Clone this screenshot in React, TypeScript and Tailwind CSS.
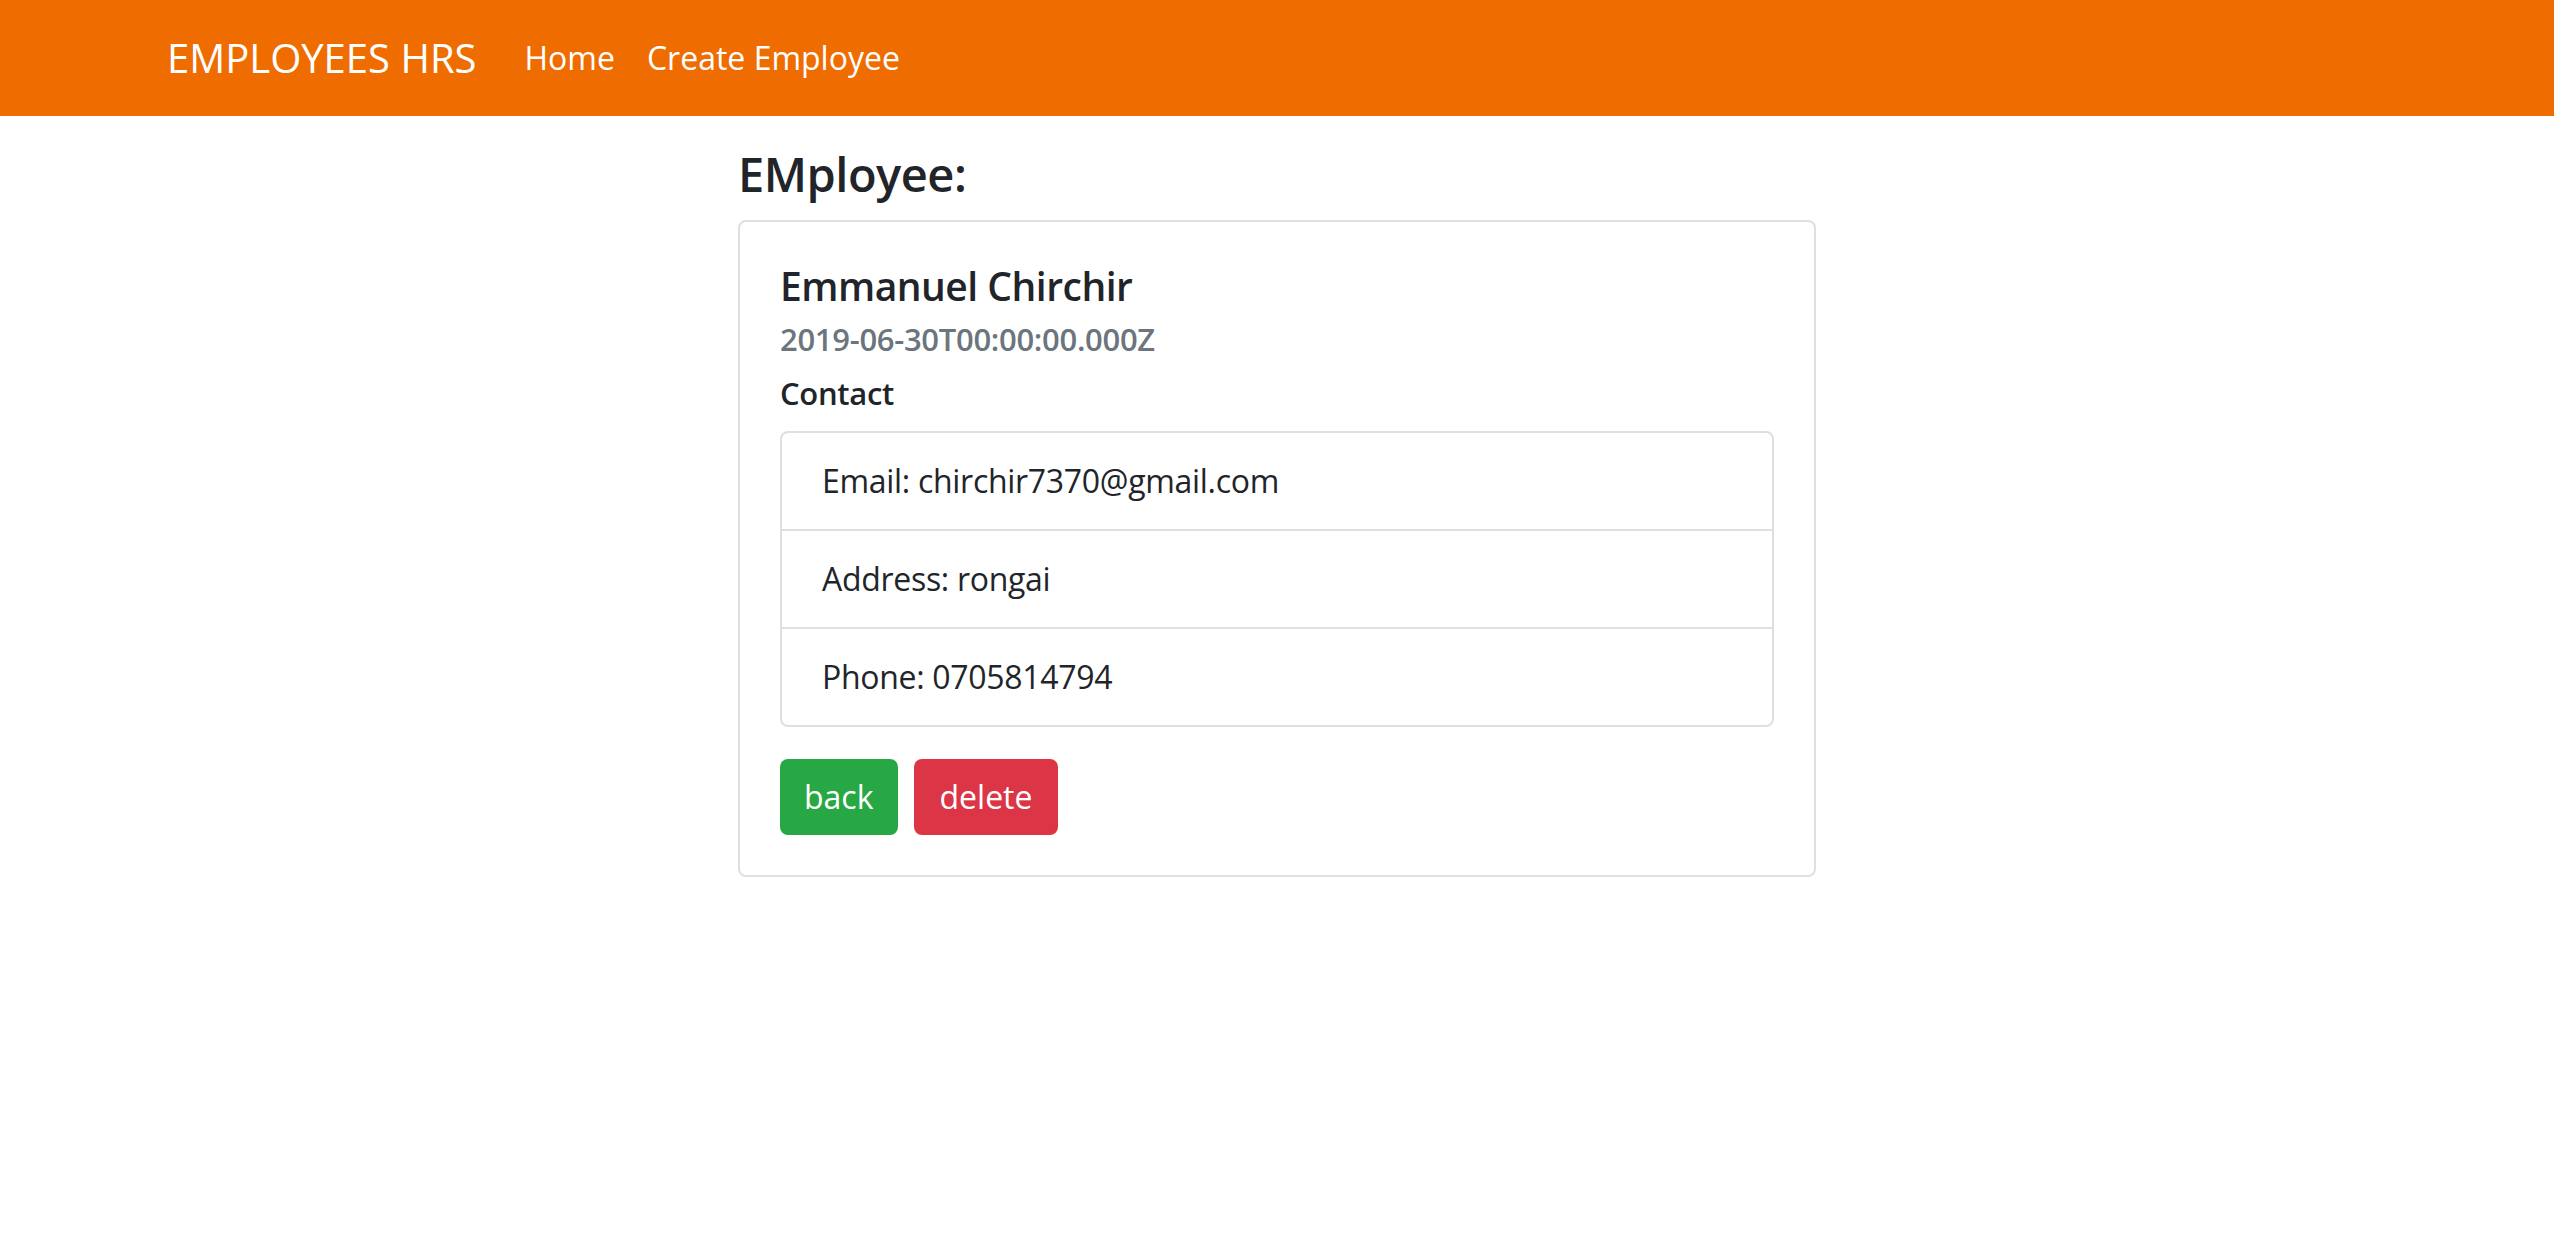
const contacts = [
  { label: 'Email', value: 'chirchir7370@gmail.com' },
  { label: 'Address', value: 'rongai' },
  { label: 'Phone', value: '0705814794' },
];

function Navbar() {
  return (
    <nav className="h-[116px] bg-[#ef6c00]">
      <div className="mx-auto flex h-full max-w-[2280px] items-center px-[30px]">
        <a href="#" className="mr-8 text-[40px] leading-[60px] text-white">
          EMPLOYEES HRS
        </a>
        <div className="flex items-center">
          <a href="#" className="px-4 text-[32px] leading-[48px] text-white">
            Home
          </a>
          <a href="#" className="px-4 text-[32px] leading-[48px] text-white">
            Create Employee
          </a>
        </div>
      </div>
    </nav>
  );
}

export default function App() {
  return (
    <div className="min-h-screen bg-white font-['Open_Sans','Noto_Sans',sans-serif] text-[#212529]">
      <Navbar />
      <main className="mx-auto w-[1078px] pt-[30px]">
        <h4 className="mb-4 text-[47px] font-semibold leading-[57.6px] tracking-[-0.5px]">EMployee:</h4>
        <div className="rounded-lg border-2 border-[#dfdfdf] px-10 pb-10 pt-[40px]">
          <h5 className="mb-[10px] text-[39px] font-semibold leading-[48px] tracking-[-0.5px]">
            Emmanuel Chirchir
          </h5>
          <h6 className="mb-4 text-[31px] font-semibold leading-[38.4px] tracking-[-0.3px] text-[#6c757d]">
            2019-06-30T00:00:00.000Z
          </h6>
          <h6 className="mb-[19px] text-[31px] font-semibold leading-[38.4px] tracking-[-0.3px]">Contact</h6>
          <ul className="overflow-hidden rounded-lg border-2 border-[#dfdfdf]">
            {contacts.map((c, i) => (
              <li
                key={c.label}
                className={
                  i === 0
                    ? 'px-10 py-6 text-[32px] leading-[48px] tracking-[-0.3px]'
                    : 'border-t-2 border-[#dfdfdf] px-10 py-6 text-[32px] leading-[48px] tracking-[-0.3px]'
                }
              >
                {c.label}: {c.value}
              </li>
            ))}
          </ul>
          <div className="mt-8 flex gap-4">
            <button className="rounded-lg border-2 border-[#28a745] bg-[#28a745] px-[22px] py-3 text-[32px] leading-[48px] text-white">
              back
            </button>
            <button className="rounded-lg border-2 border-[#dc3545] bg-[#dc3545] px-6 py-3 text-[32px] leading-[48px] text-white">
              delete
            </button>
          </div>
        </div>
      </main>
    </div>
  );
}
